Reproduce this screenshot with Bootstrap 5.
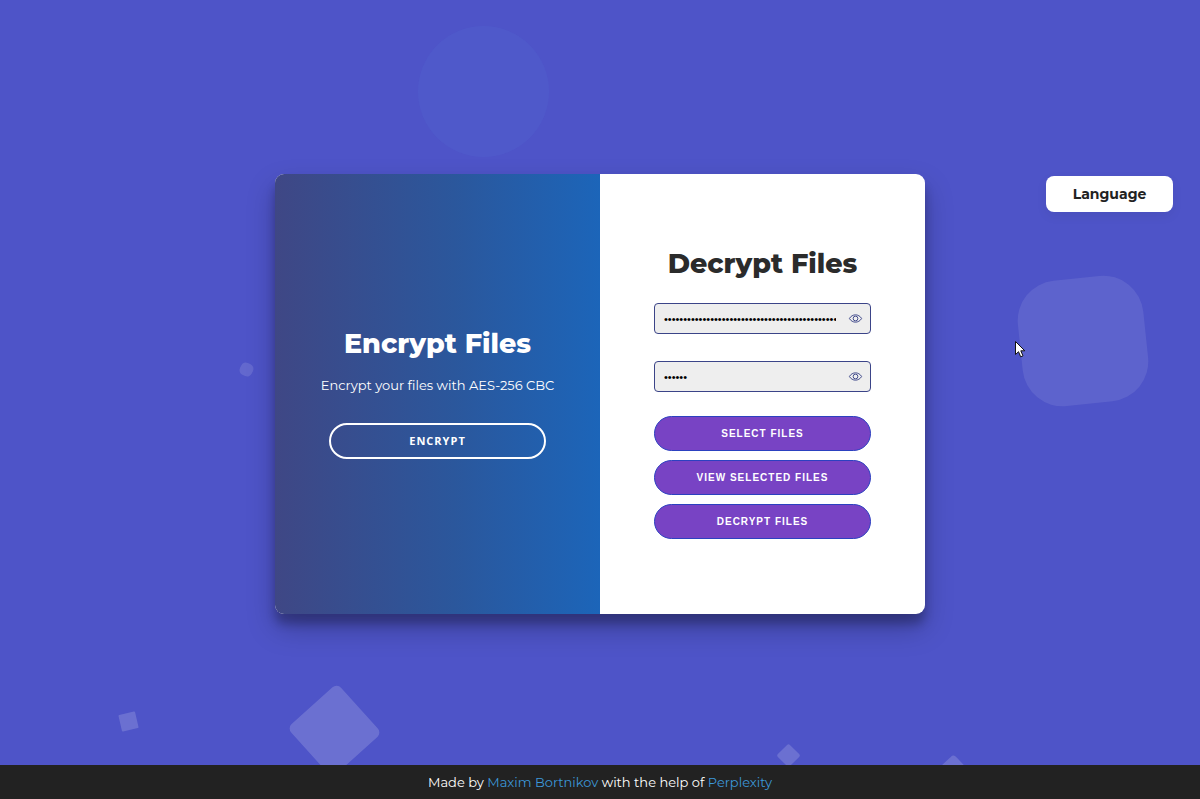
<!DOCTYPE html>
<html lang="en">
<head>
<meta charset="utf-8">
<meta name="viewport" content="width=device-width, initial-scale=1">
<title>File Encryption</title>
<link href="https://cdn.jsdelivr.net/npm/bootstrap@5.3.0/dist/css/bootstrap.min.css" rel="stylesheet">
<style>
  body { background: #4e54c8; font-family: Montserrat, Inter, sans-serif; font-size: 13px; color: #222; }
  .stage { grid-template-columns: 1fr minmax(0, 650px) 1fr; padding-top: 23px; align-content: center; }
  .panels { grid-column: 2; background: #fff; border-radius: 9px; box-shadow: 0 14px 28px rgba(0,0,0,.25), 0 10px 10px rgba(0,0,0,.22); z-index: 1; }
  .panel { min-height: 440px; }
  .panel-encrypt { background: linear-gradient(to right, #3f4785, #2b579c 55%, #1c65b9); }
  .panel-title { font-size: 27px; line-height: 30px; font-weight: 800; }
  .panel-decrypt .panel-title { color: #2b2b2b; margin-bottom: 24px; }
  .panel-text { line-height: 20px; margin: 16px 0 28px; }
  .form-col { width: 66.8%; }
  .fields { gap: 27px; margin-bottom: 24px; }
  .actions { gap: 9px; }
  .pill { border-radius: 20px; font: 700 10px/17px "Liberation Sans", sans-serif; letter-spacing: 1px; text-transform: uppercase; padding: 8px 0; width: 100%; color: #fff; }
  .pill-outline { font: 700 11px/16px "Open Sans", sans-serif; border: 2px solid #fff; width: 66.8%; background: none; }
  .pill-fill { background: #7843c4; border: 1px solid #2c41c0; }
  .pill:hover { color: #fff; opacity: .9; }
  .secret { height: 31px; background: #eee; border: 1px solid #3b4488; border-radius: 4px; padding: 0 34px 0 9px; font: 11px "Liberation Sans", sans-serif; color: #000; }
  .secret:focus { background: #eee; }
  .reveal { right: 8px; top: 8px; width: 15px; height: 15px; color: #3b4488; }
  .language { margin: 2px 27px 0 0; width: 127px; height: 36px; border-radius: 8px; background: #fff; font-family: Montserrat, Inter, sans-serif; font-size: 14px; font-weight: 700; color: #222; z-index: 1; box-shadow: 0 4px 12px rgba(0,0,0,.06); }
  .language:hover { background: #f4f4f4; }
  .foot { background: #222; color: #fff; line-height: 20px; padding: 7px; z-index: 2; }
  .foot a { color: #3c97d8; text-decoration: none; }
  .shapes span { position: absolute; background: rgba(255,255,255,.17); }
  .shapes .s1 { left: 418px; top: 26px; width: 131px; height: 131px; border-radius: 50%; background: rgba(90,120,220,.16); }
  .shapes .s2 { left: 85%; top: 278px; width: 126px; height: 126px; border-radius: 40px; transform: rotate(-6deg); background: rgba(255,255,255,.09); }
  .shapes .s3 { left: 20%; top: 363px; width: 13px; height: 13px; border-radius: 5px; transform: rotate(25deg); background: rgba(255,255,255,.12); }
  .shapes .s4 { left: 10%; top: 713px; width: 17px; height: 17px; border-radius: 1px; transform: rotate(-13deg); }
  .shapes .s5 { left: 301px; top: 697px; width: 67px; height: 67px; border-radius: 6px; transform: rotate(48deg); }
  .shapes .s6 { left: 65%; top: 747px; width: 17px; height: 17px; border-radius: 2px; transform: rotate(45deg); }
  .shapes .s7 { left: 939px; top: 760px; width: 28px; height: 28px; border-radius: 4px; transform: rotate(47deg); }
  .pointer { left: 84.5%; top: 340px; z-index: 3; pointer-events: none; }
</style>
</head>
<body class="min-vh-100 d-flex flex-column position-relative overflow-hidden">
<div class="shapes" aria-hidden="true">
  <span class="s1"></span><span class="s2"></span><span class="s3"></span><span class="s4"></span><span class="s5"></span><span class="s6"></span><span class="s7"></span>
</div>

<main class="stage d-grid flex-grow-1">
  <div class="panels row g-0 overflow-hidden position-relative">
    <section class="panel panel-encrypt col-6 d-flex flex-column align-items-center justify-content-center text-center text-white">
      <h1 class="panel-title m-0">Encrypt Files</h1>
      <p class="panel-text">Encrypt your files with AES-256 CBC</p>
      <button type="button" class="btn pill pill-outline">Encrypt</button>
    </section>
    <section class="panel panel-decrypt col-6 d-flex flex-column align-items-center justify-content-center">
      <h1 class="panel-title">Decrypt Files</h1>
      <form class="form-col">
        <div class="fields d-grid">
          <div class="position-relative">
            <label class="visually-hidden" for="key" aria-label="Key"></label>
            <input id="key" type="password" class="form-control secret" value="0123456789abcdef0123456789abcdef0123456789abcdef" autocomplete="off" aria-label="Key">
            <button type="button" class="reveal btn p-0 border-0 position-absolute d-flex" aria-label="Show key">
              <svg width="15" height="15" viewBox="0 0 16 16" fill="none" stroke="currentColor"><path d="M1.5 8C4.5 2.8 11.5 2.8 14.5 8C11.5 13.2 4.5 13.2 1.5 8Z"/><circle cx="8" cy="8" r="2.5"/></svg>
            </button>
          </div>
          <div class="position-relative">
            <label class="visually-hidden" for="pass" aria-label="Password"></label>
            <input id="pass" type="password" class="form-control secret" value="secret" autocomplete="off" aria-label="Password">
            <button type="button" class="reveal btn p-0 border-0 position-absolute d-flex" aria-label="Show password">
              <svg width="15" height="15" viewBox="0 0 16 16" fill="none" stroke="currentColor"><path d="M1.5 8C4.5 2.8 11.5 2.8 14.5 8C11.5 13.2 4.5 13.2 1.5 8Z"/><circle cx="8" cy="8" r="2.5"/></svg>
            </button>
          </div>
        </div>
        <div class="actions d-grid">
          <button type="button" class="btn pill pill-fill">Select Files</button>
          <button type="button" class="btn pill pill-fill">View Selected Files</button>
          <button type="button" class="btn pill pill-fill">Decrypt Files</button>
        </div>
      </form>
    </section>
  </div>
  <div class="d-flex justify-content-end align-items-start">
    <button type="button" class="btn language border-0 p-0">Language</button>
  </div>
</main>

<footer class="foot text-center position-relative">Made by <a href="#">Maxim Bortnikov</a> with the help of <a href="#">Perplexity</a></footer>

<svg class="pointer position-absolute" width="12" height="19" viewBox="0 0 12 19" aria-hidden="true"><path d="M1.5 1.5V14.5L4.5 11.7L6.7 16.8L9 15.8L6.8 10.8H10.8Z" fill="#fff" stroke="#111"/></svg>
<script src="https://cdn.jsdelivr.net/npm/bootstrap@5.3.0/dist/js/bootstrap.bundle.min.js"></script>
</body>
</html>
